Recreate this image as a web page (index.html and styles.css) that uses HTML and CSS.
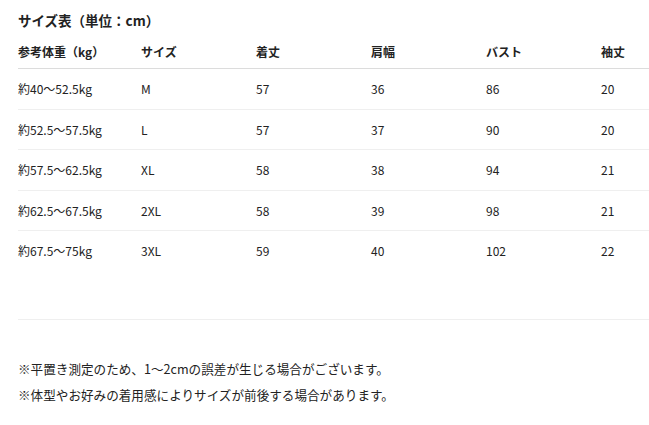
FILE: index.html
```html
<!DOCTYPE html>
<html lang="ja">
<head>
<meta charset="utf-8">
<link rel="stylesheet" href="styles.css">
</head>
<body>
<div class="page">
  <h2 class="title">サイズ表（単位：cm）</h2>
  <table class="size-table">
    <colgroup>
      <col class="c-first"><col class="c"><col class="c"><col class="c"><col class="c"><col class="c-last">
    </colgroup>
    <thead>
      <tr><th>参考体重（kg）</th><th>サイズ</th><th>着丈</th><th>肩幅</th><th>バスト</th><th>袖丈</th></tr>
    </thead>
    <tbody>
      <tr><td>約40～52.5kg</td><td>M</td><td>57</td><td>36</td><td>86</td><td>20</td></tr>
      <tr><td>約52.5～57.5kg</td><td>L</td><td>57</td><td>37</td><td>90</td><td>20</td></tr>
      <tr><td>約57.5～62.5kg</td><td>XL</td><td>58</td><td>38</td><td>94</td><td>21</td></tr>
      <tr><td>約62.5～67.5kg</td><td>2XL</td><td>58</td><td>39</td><td>98</td><td>21</td></tr>
      <tr class="last"><td>約67.5～75kg</td><td>3XL</td><td>59</td><td>40</td><td>102</td><td>22</td></tr>
      <tr class="spacer"><td colspan="6"></td></tr>
    </tbody>
  </table>
  <div class="notes">
    <p>※平置き測定のため、1～2cmの誤差が生じる場合がございます。</p>
    <p>※体型やお好みの着用感によりサイズが前後する場合があります。</p>
  </div>
</div>
</body>
</html>
```
FILE: styles.css
```css
html, body {
  margin: 0;
  padding: 0;
  background: #fff;
  overflow: hidden;
}
.page {
  padding: 10px 0 0 18px;
  font-family: "Noto Sans CJK JP", "Noto Sans", sans-serif;
  color: #222;
}
.title {
  margin: 0;
  font-size: 13.5px;
  font-weight: bold;
  line-height: 20px;
  height: 26px;
}
.size-table {
  border-collapse: collapse;
  table-layout: fixed;
  width: 631px;
  font-size: 12px;
}
.c-first { width: 123px; }
.c { width: 115px; }
.c-last { width: 48px; }
.size-table th {
  text-align: left;
  font-weight: bold;
  padding: 0;
  height: 31px;
  vertical-align: middle;
  border-bottom: 1px solid #dcdcdc;
  padding-bottom: 1px;
  white-space: nowrap;
}
.size-table td {
  padding: 0;
  height: 39.5px;
  vertical-align: middle;
  border-bottom: 1px solid #efefef;
  white-space: nowrap;
}
.size-table tr.last td {
  border-bottom: none;
}
.size-table tr.spacer td {
  height: 48px;
}
.notes {
  padding-top: 36px;
  font-size: 12.6px;
}
.notes p {
  margin: 0;
  line-height: 26px;
}
```
